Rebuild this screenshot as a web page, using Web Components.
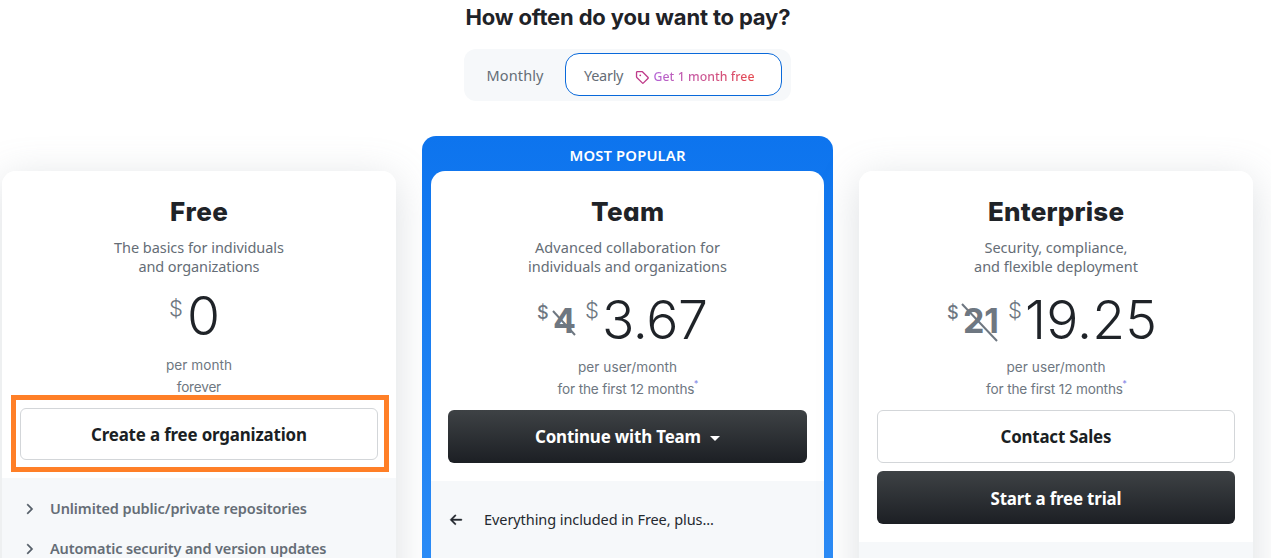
<!DOCTYPE html>
<html lang="en">
<head>
<meta charset="utf-8">
<title>Pricing</title>
<style>
html{overflow:hidden}
body{margin:0;width:1271px;height:558px;overflow:hidden;background:#fff;color:#1f2328;font-family:"Noto Sans",sans-serif}
</style>
</head>
<body>
<pricing-page></pricing-page>
<script>
/* One line of text, tracked so that its advance equals the width in "w". */
class FitText extends HTMLElement{
  connectedCallback(){
    if(!this.shadowRoot){
      this.attachShadow({mode:'open'}).innerHTML=`<style>:host{display:block;width:fit-content;white-space:pre}span{display:inline-block}</style><span><slot></slot></span>`;
    }
    const s=this.shadowRoot.querySelector('span'),w=parseFloat(this.getAttribute('w')),n=this.textContent.length;
    if(w&&n>1){
      const ls=(w-s.getBoundingClientRect().width)/(n-1);
      s.style.letterSpacing=ls+'px';
      s.style.marginRight=-ls+'px';
    }
  }
}
customElements.define('fit-text',FitText);

class BillingToggle extends HTMLElement{
  constructor(){super();this.attachShadow({mode:'open'}).innerHTML=`
<style>
:host{display:flex;box-sizing:border-box;width:327px;height:52px;border-radius:12px;background:#f6f8fa;padding:4px 9px 5px 0;color:#656d76;font-size:14.5px;line-height:43px}
.m{width:101px;box-sizing:border-box;padding:1px 0 0 22.5px}
.y{flex:1;display:flex;box-sizing:border-box;border:1px solid #0969da;border-radius:14px;background:#fff;padding-left:18px}
svg{width:14px;height:14px;margin:16px 5px 0 11px;flex:none}
.b{font-size:12.3px;font-weight:500;line-height:45px}
.b fit-text{background:linear-gradient(90deg,#b362d5,#e5484d);-webkit-background-clip:text;background-clip:text;color:transparent}
</style>
<div class="m"><fit-text w="57">Monthly</fit-text></div>
<div class="y"><fit-text w="39.5">Yearly</fit-text>
<svg viewBox="0 0 16 16" fill="#bf3989"><path d="M1 7.775V2.75C1 1.784 1.784 1 2.75 1h5.025c.464 0 .91.184 1.238.513l6.25 6.25a1.75 1.75 0 0 1 0 2.474l-5.026 5.026a1.75 1.75 0 0 1-2.474 0l-6.25-6.25A1.752 1.752 0 0 1 1 7.775Zm1.5 0c0 .066.026.13.073.177l6.25 6.25a.25.25 0 0 0 .354 0l5.025-5.025a.25.25 0 0 0 0-.354l-6.25-6.25a.25.25 0 0 0-.177-.073H2.75a.25.25 0 0 0-.25.25ZM6 5a1 1 0 1 1 0 2 1 1 0 0 1 0-2Z"/></svg>
<div class="b"><fit-text w="101">Get 1 month free</fit-text></div></div>`}
}
customElements.define('billing-toggle',BillingToggle);

class ActionButton extends HTMLElement{
  constructor(){super();this.attachShadow({mode:'open'}).innerHTML=`
<style>
:host{display:flex;box-sizing:border-box;height:53px;border:1px solid #d3d6d9;border-radius:6px;background:#fff;color:#1b1f24;justify-content:center;align-items:center;font-size:16.9px;font-weight:700;line-height:24px}
:host([dark]){border:0;color:#fff;background:linear-gradient(180deg,#3e4245,#1c1f24)}
</style><slot></slot>`}
}
customElements.define('action-button',ActionButton);

class PlanPrice extends HTMLElement{
  constructor(){super();
    this.attachShadow({mode:'open'});
    const a=n=>this.getAttribute(n);
    const old=a('old')?`<div class="os">$</div><div class="old"><fit-text w="${a('oldw')}">${a('old')}</fit-text>${a('strike')}</div>`:'';
    this.shadowRoot.innerHTML=`
<style>
:host{display:flex;align-items:flex-start;height:53px;font-family:Inter,sans-serif;color:#6e7781;line-height:1}
.os{font-size:18px;font-weight:500;margin:12px 4px 0 0;width:12px}
.old{font-size:34px;font-weight:700;margin-top:12px;position:relative;margin-right:9px}
.old svg{position:absolute;overflow:visible;stroke:#6e7781;stroke-width:2;fill:none;left:0;top:0;width:1px;height:1px}
.s{font-size:22px;font-weight:300;margin-top:7px;width:17px}
:host(:not([old])) .s{width:18px;margin-top:8px}
.n{font-size:53.5px;font-weight:300;color:#1f2328;margin-top:1px}
:host(:not([old])) .n{margin-top:0}
</style>${old}<div class="s">$</div><div class="n"><fit-text w="${a('nw')}">${a('now')}</fit-text></div>`}
}

class PlanCard extends HTMLElement{
  constructor(){super();this.attachShadow({mode:'open'}).innerHTML=`
<style>
:host{display:block;box-sizing:border-box;margin-top:35px;height:480px;border-radius:14px 14px 0 0;background:#fff;box-shadow:0 8px 40px rgba(140,149,159,.3)}
:host([popular]){margin-top:0;height:520px;background:linear-gradient(180deg,#0d74ee,#3190f8);padding:0 9px;box-shadow:none}
.flag{display:none;height:35px;color:#fff;font-size:14.8px;font-weight:600;line-height:38.4px;justify-content:center}
:host([popular]) .flag{display:flex}
.in{height:480px;border-radius:14px 14px 0 0;overflow:hidden;background:#fff;display:flex;flex-direction:column}
.top{padding:25px 18px 18px}
.c{display:flex;flex-direction:column;align-items:center}
.title{font:800 26px/32px Inter,sans-serif;height:42px;color:#1f2328}
.desc{font-size:14.5px;line-height:19px;height:51px;color:#656d76}
.price{margin:0 -18px;padding-top:var(--drop,3px)}
.per{font:400 13.6px/22px Inter,sans-serif;color:#6e7781;padding:11px 0 10px;position:relative}
:host([free]) .per{padding-top:12px}
.foot{flex:1;background:#f6f8fa}
</style>
<div class="flag"><slot name="flag"></slot></div>
<div class="in"><div class="top"><div class="c title"><slot name="title"></slot></div><div class="c desc"><slot name="desc"></slot></div><div class="price"><slot name="price"></slot></div><div class="c per"><slot name="per"></slot></div><slot name="action"></slot></div><div class="foot"><slot name="foot"></slot></div></div>`}
}

class FeatureLine extends HTMLElement{
  constructor(){super();this.attachShadow({mode:'open'}).innerHTML=`
<style>
:host{display:flex;align-items:center;height:40px;padding-left:20px;font-size:14.5px;font-weight:600;color:#656d76;line-height:20px}
svg{width:16px;height:16px;margin:2px 13px 0 -1px;fill:#57606a;stroke:#57606a;stroke-width:.4}
:host([back]){padding-left:17px;font-weight:400;color:#24292f}
:host([back]) svg{margin:2px 20px 0 0;fill:#24292f;stroke:#24292f}
</style>
<svg viewBox="0 0 16 16"><path d="${this.hasAttribute('back')?'M7.78 12.53a.75.75 0 0 1-1.06 0L2.47 8.28a.75.75 0 0 1 0-1.06l4.25-4.25a.751.751 0 0 1 1.042.018.751.751 0 0 1 .018 1.042L4.81 7h8.44a.75.75 0 0 1 0 1.5H4.81l2.97 2.97a.75.75 0 0 1 0 1.06Z':'M6.22 3.22a.75.75 0 0 1 1.06 0l4.25 4.25a.75.75 0 0 1 0 1.06l-4.25 4.25a.751.751 0 0 1-1.042-.018.751.751 0 0 1-.018-1.042L9.94 8 6.22 4.28a.75.75 0 0 1 0-1.06Z'}"/></svg><slot></slot>`}
}

class PricingPage extends HTMLElement{
  constructor(){super();this.attachShadow({mode:'open'}).innerHTML=`
<style>
:host{display:block;position:relative;height:558px;overflow:hidden}
h2{margin:0;padding-left:465.5px;height:49px;font:700 22px/34px Inter,sans-serif;color:#1f2328}
billing-toggle{margin-left:464px}
.plans{display:grid;grid-template-columns:394px 411px 394px;gap:26px;margin:35px 0 0 2px;align-items:start}
.mark{position:absolute;left:11px;top:395px;width:378px;height:77px;box-sizing:border-box;border:5px solid #ff7f27}
.star{position:relative;padding-right:3px}
.star i{position:absolute;right:-1px;top:0;font:500 9px/12px Inter,sans-serif;color:#8a8ee8}
.free-btn{height:52px;padding-top:1px}
.trial{margin-top:8px;padding-top:2px}
.caret{width:0;height:0;border:5px solid transparent;border-top-color:#fff;border-bottom:0;margin:3px 0 0 9px}
</style>
<h2><fit-text w="325">How often do you want to pay?</fit-text></h2>
<billing-toggle></billing-toggle>
<div class="plans">
<plan-card free style="--drop:0px">
 <fit-text slot="title" w="58">Free</fit-text>
 <fit-text slot="desc" w="170">The basics for individuals</fit-text><fit-text slot="desc" w="121">and organizations</fit-text>
 <plan-price slot="price" now="0" nw="0" style="margin-left:167px"></plan-price>
 <fit-text slot="per" w="66">per month</fit-text><fit-text slot="per" w="44.5">forever</fit-text>
 <action-button slot="action" class="free-btn"><fit-text w="216">Create a free organization</fit-text></action-button>
 <div slot="foot" style="padding-top:10px"><feature-line><fit-text w="257">Unlimited public/private repositories</fit-text></feature-line><feature-line><fit-text w="276.5">Automatic security and version updates</fit-text></feature-line></div>
</plan-card>
<plan-card popular>
 <fit-text slot="flag" w="116">MOST POPULAR</fit-text>
 <fit-text slot="title" w="73" style="font-feature-settings:'cv11'">Team</fit-text>
 <fit-text slot="desc" w="185">Advanced collaboration for</fit-text><fit-text slot="desc" w="199">individuals and organizations</fit-text>
 <plan-price slot="price" old="4" oldw="23" now="3.67" nw="106" style="margin-left:106px" strike='<svg><path d="M0 7L22 31"/></svg>'></plan-price>
 <fit-text slot="per" w="99">per user/month</fit-text><div slot="per" class="star"><fit-text w="137">for the first 12 months</fit-text><i>*</i></div>
 <action-button slot="action" dark style="margin:0 -1px"><fit-text w="166">Continue with Team</fit-text><div class="caret"></div></action-button>
 <div slot="foot" style="padding-top:18px"><feature-line back><fit-text w="230">Everything included in Free, plus...</fit-text></feature-line></div>
</plan-card>
<plan-card>
 <fit-text slot="title" w="136">Enterprise</fit-text>
 <fit-text slot="desc" w="143">Security, compliance,</fit-text><fit-text slot="desc" w="164">and flexible deployment</fit-text>
 <plan-price slot="price" old="21" oldw="36" now="19.25" nw="132" style="margin-left:88px" strike='<svg><path d="M-1 0L34 37"/></svg>'></plan-price>
 <fit-text slot="per" w="99">per user/month</fit-text><div slot="per" class="star"><fit-text w="137">for the first 12 months</fit-text><i>*</i></div>
 <action-button slot="action"><fit-text w="111">Contact Sales</fit-text></action-button>
 <action-button slot="action" dark class="trial"><fit-text w="131">Start a free trial</fit-text></action-button>
</plan-card>
</div>
<div class="mark"></div>`}
}
customElements.define('pricing-page',PricingPage);
customElements.define('plan-card',PlanCard);
customElements.define('plan-price',PlanPrice);
customElements.define('feature-line',FeatureLine);
/* Tracking is computed once every surrounding element has its final font. */
(function refit(root){root.querySelectorAll('*').forEach(e=>{
  if(e.localName==='fit-text'){const s=e.shadowRoot.querySelector('span');s.style.letterSpacing='';s.style.marginRight='';e.connectedCallback()}
  if(e.shadowRoot)refit(e.shadowRoot)})})(document);
</script>
</body>
</html>
